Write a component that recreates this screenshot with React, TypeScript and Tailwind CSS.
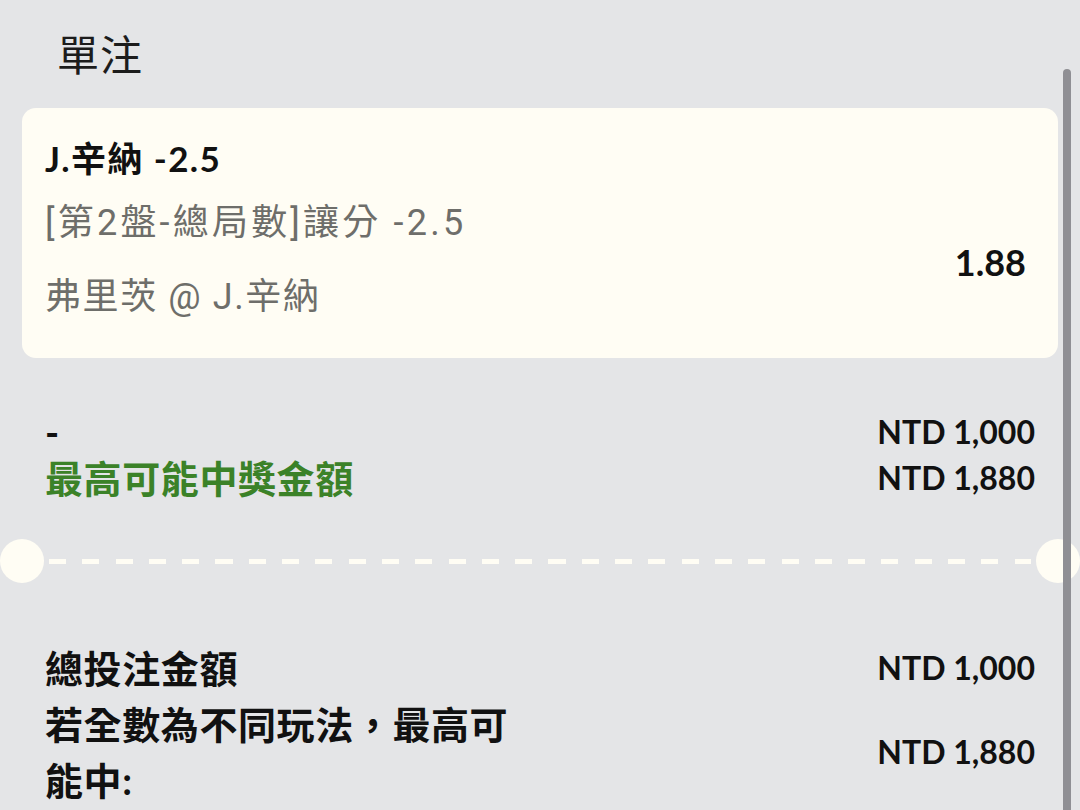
const font = "font-['Lato','Noto_Sans_CJK_TC',sans-serif]";
const grayFont = "font-['Roboto','Noto_Sans_CJK_TC',sans-serif]";

function Row({ label, value, labelClass }: { label: string; value: string; labelClass: string }) {
  return (
    <div className="flex items-center justify-between h-[46px]">
      <span className={labelClass}>{label}</span>
      <span className="text-[32px] font-bold text-[#111] leading-[46px]">{value}</span>
    </div>
  );
}

export default function App() {
  return (
    <main className={`relative h-[810px] w-[1080px] overflow-hidden bg-[#e4e5e7] ${font}`}>
      {/* scrollbar */}
      <div className="absolute right-[9px] top-[69px] bottom-0 w-[8px] rounded-t-full bg-[#8f8f94]" />

      <h1 className="mt-[34px] pl-[57px] text-[42px] leading-[42px] font-normal tracking-[1px] text-[#1c1c1c]">單注</h1>

      <div className="mx-[22px] mt-[32px] h-[250px] rounded-[14px] bg-[#fffdf4] pl-[23px] pr-[32px] pt-[28px]">
        <div className="text-[35px] font-bold leading-[44px] tracking-[1.4px] text-[#111]">J.辛納 -2.5</div>
        <div className="mt-[6px] flex items-center justify-between">
          <div className={`${grayFont} text-[36px] leading-[74px] text-[#6e6e6a]`}>
            <div className="tracking-[3.2px]">[第2盤-總局數]讓分 -2.5</div>
            <div className="tracking-[1.6px]">弗里茨 @ J.辛納</div>
          </div>
          <div className="pt-[4px] text-[36px] font-bold leading-none text-[#111]">1.88</div>
        </div>
      </div>

      <div className="mt-[51px] pl-[45px] pr-[45px]">
        <Row label="-" value="NTD 1,000" labelClass="text-[38px] font-bold leading-[46px] text-[#111]" />
        <Row label="最高可能中獎金額" value="NTD 1,880" labelClass="text-[38px] font-bold leading-[46px] tracking-[0.6px] text-[#3b8228]" />
      </div>

      <div className="mt-[38px] flex h-[44px] items-center">
        <div className="h-[44px] w-[44px] shrink-0 rounded-full bg-[#fffdf4]" />
        <div className="mx-[5px] h-[5px] flex-1 bg-[repeating-linear-gradient(90deg,#fffdf4_0px,#fffdf4_17px,transparent_17px,transparent_33.3px)]" />
        <div className="h-[44px] w-[44px] shrink-0 rounded-full bg-[#fffdf4]" />
      </div>

      <div className="mt-[57px] pl-[45px] pr-[45px] text-[#111]">
        <div className="flex items-center justify-between">
          <span className="text-[38px] font-bold leading-[56px] tracking-[0.6px]">總投注金額</span>
          <span className="text-[32px] font-bold leading-[56px]">NTD 1,000</span>
        </div>
        <div className="flex items-center justify-between">
          <span className="w-[490px] text-[38px] font-bold leading-[56px] tracking-[0.6px]">若全數為不同玩法，最高可能中:</span>
          <span className="text-[32px] font-bold leading-[56px]">NTD 1,880</span>
        </div>
      </div>
    </main>
  );
}
